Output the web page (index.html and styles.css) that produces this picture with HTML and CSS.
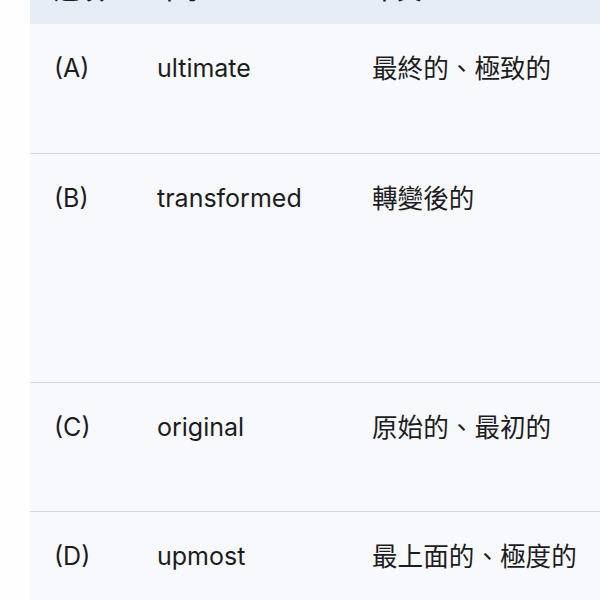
FILE: index.html
```html
<!DOCTYPE html>
<html lang="zh-Hant">
<head>
    <meta charset="UTF-8">
    <meta name="viewport" content="width=device-width, initial-scale=1.0">
    <title>單字選項</title>
    <link rel="stylesheet" href="styles.css">
</head>
<body>
    <section class="vocab-section">
        <table class="vocab-table">
            <thead>
                <tr>
                    <th class="col-option">選項</th>
                    <th class="col-word">單字</th>
                    <th class="col-meaning">中文</th>
                </tr>
            </thead>
            <tbody>
                <tr class="row-first">
                    <td>(A)</td>
                    <td>ultimate</td>
                    <td class="meaning">最終的、極致的</td>
                </tr>
                <tr class="row-tall">
                    <td>(B)</td>
                    <td>transformed</td>
                    <td class="meaning">轉變後的</td>
                </tr>
                <tr class="row-short">
                    <td>(C)</td>
                    <td>original</td>
                    <td class="meaning">原始的、最初的</td>
                </tr>
                <tr class="row-short">
                    <td>(D)</td>
                    <td>upmost</td>
                    <td class="meaning">最上面的、極度的</td>
                </tr>
            </tbody>
        </table>
    </section>
</body>
</html>
```

FILE: styles.css
```css
* {
    margin: 0;
    padding: 0;
    box-sizing: border-box;
}

body {
    background-color: #fefefe;
    font-family: 'Inter', 'Noto Sans CJK TC', sans-serif;
    color: #1c1c1e;
    overflow: hidden;
}

.vocab-section {
    padding-left: 30px;
    margin-top: -42px;
}

.vocab-table {
    width: 100%;
    table-layout: fixed;
    border-collapse: collapse;
    font-size: 25px;
    line-height: 1.5;
}

.vocab-table th {
    background: #e6ecf5;
    font-weight: 500;
    text-align: left;
    padding: 14px 24px 14px 24px;
}

.vocab-table td {
    background: #f8f9fc;
    vertical-align: top;
    padding: 26px 24px 0 24px;
    border-bottom: 1px solid #d6d7dc;
}

.vocab-table td.meaning {
    font-size: 25.6px;
    line-height: 37.5px;
    white-space: nowrap;
}

.col-option {
    width: 103px;
}

.col-word {
    width: 215px;
}

.row-first td {
    height: 130px;
}

.row-short td {
    height: 129px;
}

.row-tall td {
    height: 229px;
}
```
